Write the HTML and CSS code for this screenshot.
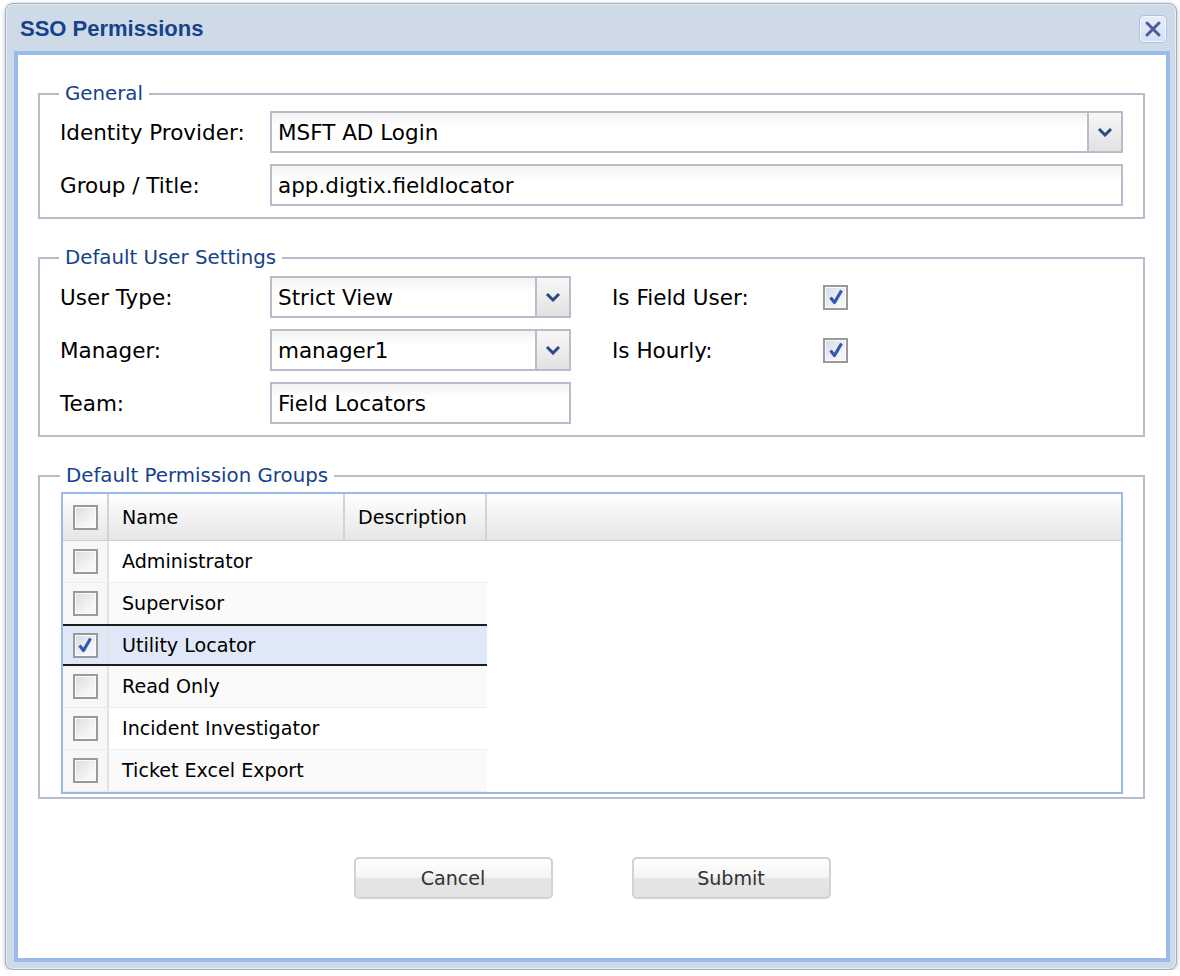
FILE: index.html
```html
<!DOCTYPE html>
<html>
<head>
<meta charset="utf-8">
<title>SSO Permissions</title>
<link rel="stylesheet" href="styles.css">
</head>
<body>
<div class="win">
  <div class="win-head">
    <span class="win-title">SSO Permissions</span>
    <span class="win-close"><svg width="20" height="20" viewBox="0 0 20 20"><path d="M4 4 L16 16 M16 4 L4 16" stroke="#4a5c9c" stroke-width="3" stroke-linecap="round" fill="none"/></svg></span>
  </div>
  <div class="win-body">
    <fieldset class="fs fs-general">
      <legend>General</legend>
      <div class="row">
        <label class="lbl">Identity Provider:</label>
        <div class="field combo grow">
          <span class="field-text">MSFT AD Login</span>
          <span class="trigger"><svg width="16" height="10" viewBox="0 0 16 10"><path d="M2 2 L8 8 L14 2" stroke="#2c4a86" stroke-width="3" fill="none"/></svg></span>
        </div>
      </div>
      <div class="row">
        <label class="lbl">Group / Title:</label>
        <div class="field grow"><span class="field-text">app.digtix.fieldlocator</span></div>
      </div>
    </fieldset>

    <fieldset class="fs fs-user">
      <legend>Default User Settings</legend>
      <div class="row">
        <label class="lbl">User Type:</label>
        <div class="field combo narrow">
          <span class="field-text">Strict View</span>
          <span class="trigger"><svg width="16" height="10" viewBox="0 0 16 10"><path d="M2 2 L8 8 L14 2" stroke="#2c4a86" stroke-width="3" fill="none"/></svg></span>
        </div>
        <label class="lbl lbl2">Is Field User:</label>
        <span class="cb checked"><svg width="20" height="20" viewBox="0 0 20 20"><path d="M4.5 10.5 L8.5 15.5 L15.5 3.5" stroke="#3557b2" stroke-width="3.2" fill="none" stroke-linejoin="round"/></svg></span>
      </div>
      <div class="row">
        <label class="lbl">Manager:</label>
        <div class="field combo narrow">
          <span class="field-text">manager1</span>
          <span class="trigger"><svg width="16" height="10" viewBox="0 0 16 10"><path d="M2 2 L8 8 L14 2" stroke="#2c4a86" stroke-width="3" fill="none"/></svg></span>
        </div>
        <label class="lbl lbl2">Is Hourly:</label>
        <span class="cb checked"><svg width="20" height="20" viewBox="0 0 20 20"><path d="M4.5 10.5 L8.5 15.5 L15.5 3.5" stroke="#3557b2" stroke-width="3.2" fill="none" stroke-linejoin="round"/></svg></span>
      </div>
      <div class="row">
        <label class="lbl">Team:</label>
        <div class="field narrow"><span class="field-text">Field Locators</span></div>
      </div>
    </fieldset>

    <fieldset class="fs fs-perm">
      <legend>Default Permission Groups</legend>
      <div class="grid">
        <div class="grid-head">
          <div class="hcell c-check"><span class="cb"></span></div>
          <div class="hcell c-name">Name</div>
          <div class="hcell c-desc">Description</div>
          <div class="hcell c-fill"></div>
        </div>
        <div class="grid-rows">
          <div class="grow-row">
            <div class="cell c-check"><span class="cb"></span></div>
            <div class="cell c-name">Administrator</div>
            <div class="cell c-desc"></div>
          </div>
          <div class="grow-row alt">
            <div class="cell c-check"><span class="cb"></span></div>
            <div class="cell c-name">Supervisor</div>
            <div class="cell c-desc"></div>
          </div>
          <div class="grow-row sel">
            <div class="cell c-check"><span class="cb checked"><svg width="20" height="20" viewBox="0 0 20 20"><path d="M4.5 10.5 L8.5 15.5 L15.5 3.5" stroke="#3557b2" stroke-width="3.2" fill="none" stroke-linejoin="round"/></svg></span></div>
            <div class="cell c-name">Utility Locator</div>
            <div class="cell c-desc"></div>
          </div>
          <div class="grow-row alt">
            <div class="cell c-check"><span class="cb"></span></div>
            <div class="cell c-name">Read Only</div>
            <div class="cell c-desc"></div>
          </div>
          <div class="grow-row">
            <div class="cell c-check"><span class="cb"></span></div>
            <div class="cell c-name">Incident Investigator</div>
            <div class="cell c-desc"></div>
          </div>
          <div class="grow-row alt">
            <div class="cell c-check"><span class="cb"></span></div>
            <div class="cell c-name">Ticket Excel Export</div>
            <div class="cell c-desc"></div>
          </div>
        </div>
      </div>
    </fieldset>

    <div class="buttons">
      <button class="btn">Cancel</button>
      <button class="btn">Submit</button>
    </div>
  </div>
</div>
</body>
</html>
```

FILE: styles.css
```css
html, body {
  margin: 0;
  padding: 0;
  background: #ffffff;
}
body {
  font-family: "DejaVu Sans", Verdana, sans-serif;
  font-size: 21.5px;
  color: #000;
}
.win {
  box-sizing: border-box;
  margin: 3px 0 0 5px;
  width: 1172px;
  height: 967px;
  border: 1px solid #9fb0c6;
  border-radius: 8px;
  background: #cfdae8;
  box-shadow: inset 0 0 0 1px #e6edf5, 0 1px 4px rgba(0,0,0,0.25);
  padding: 0 6px 7px 8px;
  display: flex;
  flex-direction: column;
}
.win-head {
  height: 47px;
  display: flex;
  align-items: center;
  justify-content: space-between;
  padding: 0 3px 0 6px;
  flex: none;
}
.win-title {
  font-family: "Liberation Sans", Arial, sans-serif;
  font-weight: bold;
  font-size: 22px;
  color: #15428b;
  margin-top: 2px;
}
.win-close {
  box-sizing: border-box;
  width: 28px;
  height: 28px;
  border: 1px solid #a9c1e2;
  border-radius: 5px;
  background: linear-gradient(#e6eef9, #d3e0f2);
  box-shadow: inset 0 0 0 1px #f4f8fd;
  display: flex;
  align-items: center;
  justify-content: center;
  margin-top: 2px;
}
.win-body {
  flex: 1;
  border: 4px solid #99bbe8;
  background: #fff;
  display: flex;
  flex-direction: column;
}
.fs {
  margin: 27px 21px 0 20px;
  border: 2px solid #b9bccb;
  padding: 0 20px 11px 20px;
  min-width: 0;
}
.fs legend {
  color: #15428b;
  padding: 0 6px;
  margin-left: -1px;
  line-height: 24px;
  font-size: 19.8px;
}
.fs-general legend + .row { margin-top: 5px; }
.fs-user legend + .row { margin-top: 6px; }
.row {
  display: flex;
  align-items: center;
  height: 42px;
  margin-top: 11px;
}
.lbl {
  width: 210px;
  flex: none;
  white-space: nowrap;
}
.lbl2 {
  width: 211px;
  margin-left: 41px;
}
.field {
  box-sizing: border-box;
  height: 42px;
  border: 2px solid #b9bccb;
  background: linear-gradient(#f2f2f2, #ffffff 35%);
  display: flex;
  align-items: center;
}
.field-text {
  flex: 1;
  padding-left: 6px;
  white-space: nowrap;
}
.grow { flex: 1; }
.narrow { width: 301px; flex: none; }
.trigger {
  box-sizing: border-box;
  width: 34px;
  height: 38px;
  border-left: 2px solid #b9bccb;
  background: linear-gradient(#f7f7f7, #e2e2e2);
  display: flex;
  align-items: center;
  justify-content: center;
}
.cb {
  box-sizing: border-box;
  display: inline-flex;
  align-items: center;
  justify-content: center;
  width: 25px;
  height: 25px;
  border: 2px solid #9a9a9a;
  background: linear-gradient(135deg, #dcdcdc, #f6f6f6 70%);
  box-shadow: inset 0 0 0 1px #fbfbfb;
}
.cb.checked {
  background: linear-gradient(135deg, #d5dae2, #f3f5f8 70%);
}
.cb svg { display: block; }

.fs-perm legend + .grid { margin-top: 4px; }
.fs-perm { padding: 0 20px 3px 21px; }
.grid {
  box-sizing: border-box;
  height: 302px;
  border: 2px solid #99bbe8;
  background: #fff;
  font-size: 19.1px;
}
.grid-head {
  display: flex;
  height: 46px;
  border-bottom: 1px solid #d0d0d0;
  background: linear-gradient(#ffffff, #f2f2f2 50%, #e6e6e6);
}
.hcell {
  box-sizing: border-box;
  display: flex;
  align-items: center;
  border-right: 2px solid #d3d3d3;
  padding-left: 13px;
  white-space: nowrap;
}
.c-check {
  width: 46px;
  padding-left: 0;
  justify-content: center;
  flex: none;
}
.c-name { width: 236px; flex: none; }
.c-desc { width: 142px; flex: none; }
.c-fill { flex: 1; border-right: none; }
.grid-rows { width: 424px; }
.grow-row {
  box-sizing: border-box;
  display: flex;
  height: 42px;
  border-bottom: 1px solid #ececec;
  background: #fff;
}
.grow-row.alt { background: #fafafa; }
.grow-row.sel {
  background: #dfe8f6;
  border-top: 2px solid #1c1c1c;
  border-bottom: 2px solid #1c1c1c;
  margin-top: -1px;
}
.cell {
  box-sizing: border-box;
  display: flex;
  align-items: center;
  padding-left: 13px;
  white-space: nowrap;
}
.cell.c-check {
  padding-left: 0;
  background: #f7f7f7;
  border-right: 2px solid #e2e2e2;
}
.grow-row.sel .cell.c-check { background: #dfe8f6; }

.buttons {
  display: flex;
  justify-content: center;
  gap: 79px;
  margin-top: 58px;
  padding-left: 0;
}
.btn {
  box-sizing: border-box;
  width: 199px;
  height: 42px;
  border: 2px solid #d2d2d2;
  border-radius: 5px;
  background: linear-gradient(#ffffff 0%, #f5f5f5 48%, #e5e5e5 52%, #e3e3e3 100%);
  font-family: "DejaVu Sans", Verdana, sans-serif;
  font-size: 19.1px;
  color: #333;
  padding: 0;
}
```
